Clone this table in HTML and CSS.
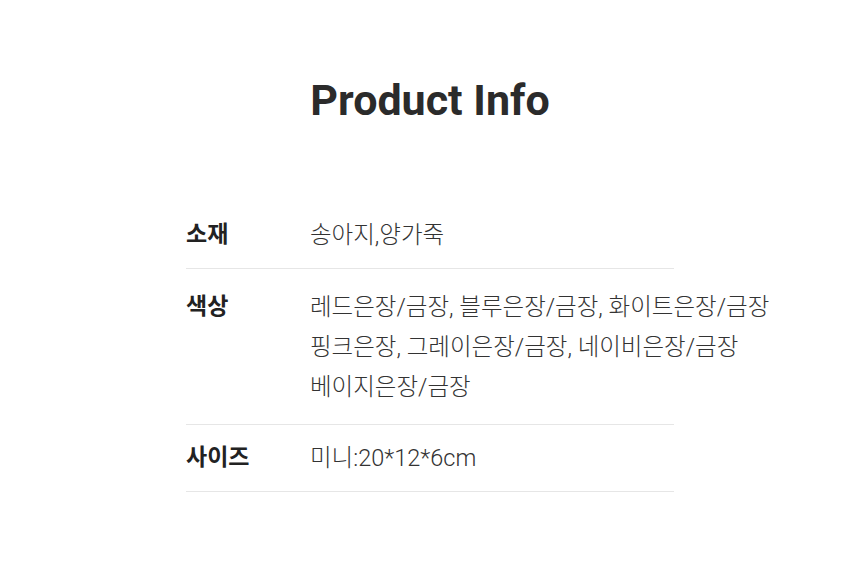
FILE: index.html
```html
<!DOCTYPE html>
<html lang="ko">
<head>
<meta charset="UTF-8" />
<meta name="viewport" content="width=device-width, initial-scale=1" />
<title>Product Info</title>
<link rel="stylesheet" href="styles.css">
</head>
<body>

<section class="info">
  <h2 class="info-title">Product Info</h2>

  <table class="info-table">
    <tr>
      <th>소재</th>
      <td>송아지,양가죽</td>
    </tr>
    <tr>
      <th class="multi">색상</th>
      <td class="multi">레드은장/금장, 블루은장/금장, 화이트은장/금장<br>핑크은장, 그레이은장/금장, 네이비은장/금장<br>베이지은장/금장</td>
    </tr>
    <tr>
      <th>사이즈</th>
      <td>미니:20*12*6cm</td>
    </tr>
  </table>
</section>

</body>
</html>
```

FILE: styles.css
```css
body { margin: 0; background: #fff; color: #333; font-family: Roboto, "Noto Sans CJK KR", sans-serif; }

.info { padding-top: 70px; }
.info-title {
  margin: 0; text-align: center; font-size: 43px; line-height: 60px;
  font-weight: 700; color: #2b2b2b;
}

.info-table {
  width: 488px; margin: 72px auto 0; border-collapse: collapse;
  table-layout: fixed;
}
.info-table th, .info-table td {
  padding: 13px 0; line-height: 40px; text-align: left; vertical-align: top;
  border-bottom: 1px solid #e6e6e6; white-space: nowrap;
}
.info-table th {
  width: 124px; font-size: 23px; font-weight: 700; color: #222;
}
.info-table td {
  font-size: 23.5px; font-weight: 300; color: #333;
}
.info-table .multi { padding: 18px 0 17px; }
```
